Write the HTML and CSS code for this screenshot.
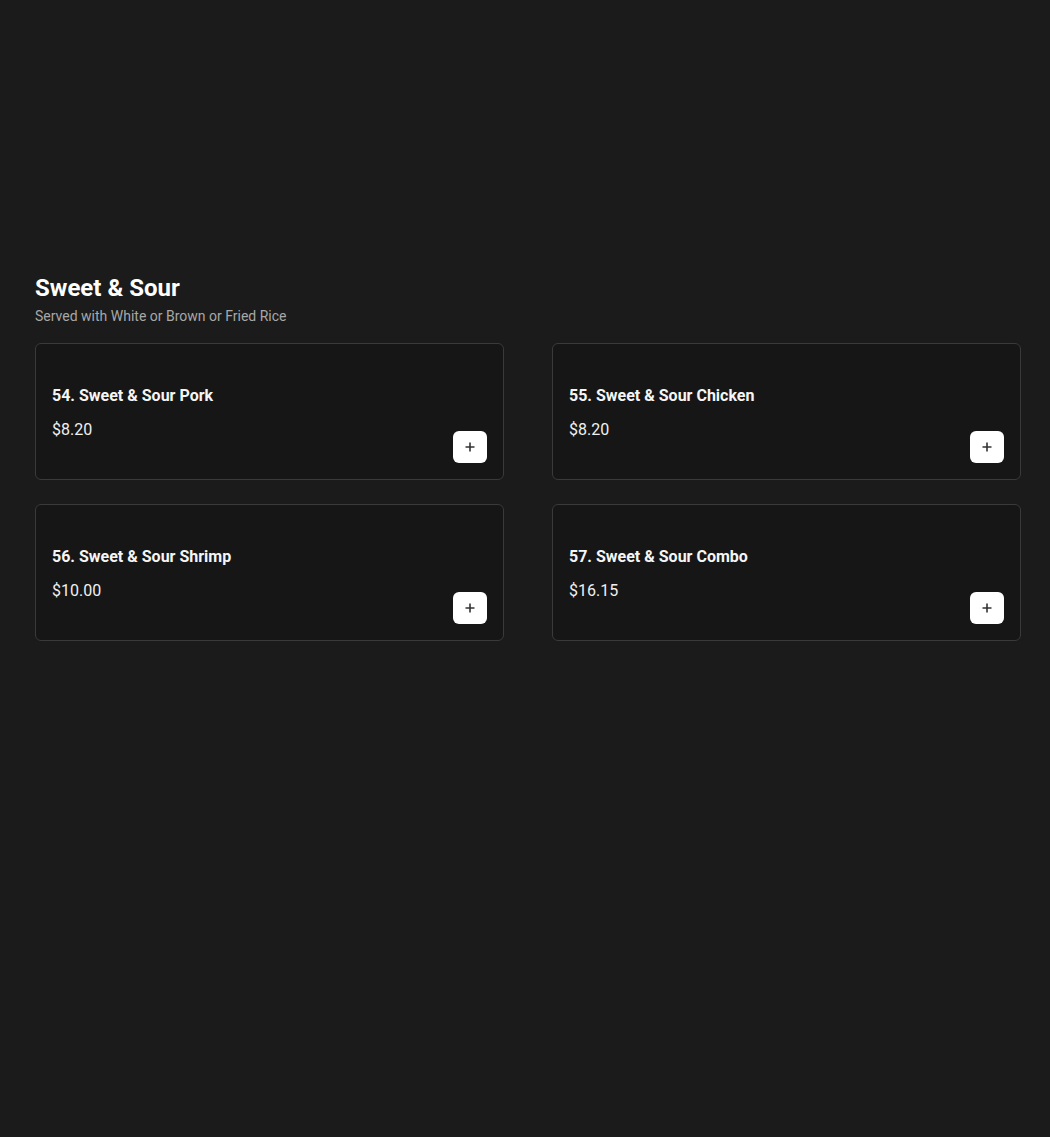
FILE: index.html
```html
<!DOCTYPE html>
<html lang="en">
<head>
<meta charset="utf-8">
<title>Sweet &amp; Sour</title>
<link rel="stylesheet" href="styles.css">
</head>
<body>
<main class="page">
  <section class="category">
    <h2 class="category-title">Sweet &amp; Sour</h2>
    <p class="category-desc">Served with White or Brown or Fried Rice</p>
    <div class="grid">
      <div class="card">
        <div class="card-title">54. Sweet &amp; Sour Pork</div>
        <div class="card-footer">
          <span class="price">$8.20</span>
          <button class="add" aria-label="Add"><svg width="12" height="12" viewBox="0 0 12 12"><path d="M6 1.5v9M1.5 6h9" stroke="#333" stroke-width="1.6" fill="none"/></svg></button>
        </div>
      </div>
      <div class="card">
        <div class="card-title">55. Sweet &amp; Sour Chicken</div>
        <div class="card-footer">
          <span class="price">$8.20</span>
          <button class="add" aria-label="Add"><svg width="12" height="12" viewBox="0 0 12 12"><path d="M6 1.5v9M1.5 6h9" stroke="#333" stroke-width="1.6" fill="none"/></svg></button>
        </div>
      </div>
      <div class="card">
        <div class="card-title">56. Sweet &amp; Sour Shrimp</div>
        <div class="card-footer">
          <span class="price">$10.00</span>
          <button class="add" aria-label="Add"><svg width="12" height="12" viewBox="0 0 12 12"><path d="M6 1.5v9M1.5 6h9" stroke="#333" stroke-width="1.6" fill="none"/></svg></button>
        </div>
      </div>
      <div class="card">
        <div class="card-title">57. Sweet &amp; Sour Combo</div>
        <div class="card-footer">
          <span class="price">$16.15</span>
          <button class="add" aria-label="Add"><svg width="12" height="12" viewBox="0 0 12 12"><path d="M6 1.5v9M1.5 6h9" stroke="#333" stroke-width="1.6" fill="none"/></svg></button>
        </div>
      </div>
    </div>
  </section>
</main>
</body>
</html>
```

FILE: styles.css
```css
html, body {
  margin: 0;
  padding: 0;
  background: #1b1b1b;
  font-family: Roboto, "Liberation Sans", Arial, sans-serif;
  color: #f2f2f2;
}

.page {
  padding: 274px 29px 0 35px;
}

.category-title {
  margin: 0;
  font-size: 24px;
  line-height: 28px;
  font-weight: 700;
  color: #ffffff;
}

.category-desc {
  margin: 4px 0 0;
  font-size: 14px;
  line-height: 20px;
  color: #a8a8a8;
}

.grid {
  margin-top: 17px;
  display: grid;
  grid-template-columns: 1fr 1fr;
  column-gap: 48px;
  row-gap: 24px;
}

.card {
  background: #161616;
  border: 1px solid #3a3a3a;
  border-radius: 6px;
  padding: 16px;
  display: flex;
  flex-direction: column;
}

.card-title {
  margin-top: 26px;
  font-size: 16px;
  line-height: 20px;
  font-weight: 700;
  color: #f5f5f5;
}

.card-footer {
  margin-top: 14px;
  display: flex;
  justify-content: space-between;
  align-items: flex-start;
}

.price {
  font-size: 16px;
  line-height: 20px;
  color: #f0f0f0;
}

.add {
  margin-top: 11px;
  width: 34px;
  height: 32px;
  border: none;
  border-radius: 6px;
  background: #ffffff;
  display: flex;
  align-items: center;
  justify-content: center;
  padding: 0;
  cursor: pointer;
}
```
